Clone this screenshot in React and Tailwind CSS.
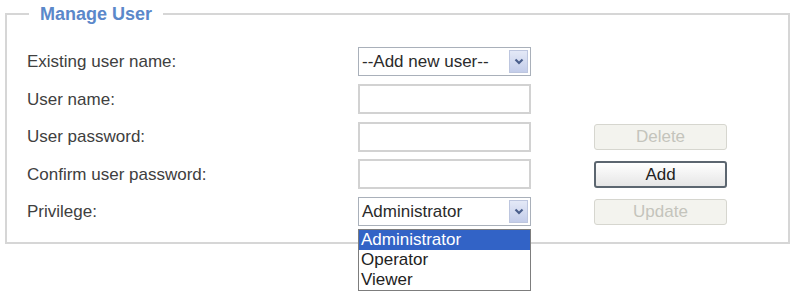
import { useState } from "react";

const FONT = { fontFamily: '"Liberation Sans", Arial, sans-serif' };

function SelectBox({ value }) {
  return (
    <div className="relative flex h-[29px] w-[173px] items-center border border-[#a9b0ba] bg-white pl-[3px] text-[17px] text-[#2b2b2b]">
      <span>{value}</span>
      <span className="absolute right-[2px] top-[2px] bottom-[2px] flex w-[19px] items-center justify-center border border-[#bdc6df] bg-gradient-to-b from-[#e4e9f7] to-[#c3cdea]">
        <svg width="10" height="7" viewBox="0 0 10 7">
          <path d="M1.5 1.5 L5 5 L8.5 1.5" fill="none" stroke="#4a5f8c" strokeWidth="2.2" />
        </svg>
      </span>
    </div>
  );
}

function TextBox() {
  return <div className="h-[30px] w-[173px] border-2 border-[#d2d2d2] bg-white" />;
}

function Btn({ children, disabled }) {
  return disabled ? (
    <div className="flex h-[26px] w-[133px] items-center justify-center rounded-[3px] border border-[#d6d6cf] bg-[#f3f3ee] text-[17px] text-[#c4c4bc]">
      {children}
    </div>
  ) : (
    <div className="flex h-[27px] w-[133px] items-center justify-center rounded-[3px] border-2 border-[#5c6670] bg-gradient-to-b from-white to-[#e6e6e6] text-[17px] text-[#222]">
      {children}
    </div>
  );
}

export default function App() {
  const [open] = useState(true);
  const rows = [
    { label: "Existing user name:", field: <SelectBox value="--Add new user--" /> },
    { label: "User name:", field: <TextBox /> },
    { label: "User password:", field: <TextBox />, btn: <Btn disabled>Delete</Btn> },
    { label: "Confirm user password:", field: <TextBox />, btn: <Btn>Add</Btn> },
    { label: "Privilege:", field: <SelectBox value="Administrator" />, btn: <Btn disabled>Update</Btn>, menu: true },
  ];

  return (
    <div className="h-[296px] w-[793px] bg-white pt-[4px]" style={FONT}>
      <fieldset className="ml-[5px] w-[785px] border-2 border-[#d6d6d6] pb-[11px] pl-[20px]">
        <legend className="ml-[2px] px-[11px] text-[18px] font-bold leading-[20px] text-[#5b88ca]">
          Manage User
        </legend>
        <div className="mt-[19px] flex flex-col">
          {rows.map((r) => (
            <div key={r.label} className="flex h-[37.5px] items-center">
              <div className="w-[331px] text-[17px] text-[#404040]">{r.label}</div>
              <div className="relative w-[173px]">
                {r.field}
                {r.menu && open && (
                  <div className="absolute left-0 top-[32px] z-10 w-[173px] border border-[#7d7d7d] bg-white text-[17px] leading-[20px] text-[#222]">
                    <div className="bg-[#3263c6] pl-[2px] text-white">Administrator</div>
                    <div className="pl-[2px]">Operator</div>
                    <div className="pl-[2px]">Viewer</div>
                  </div>
                )}
              </div>
              <div className="ml-[63px]">{r.btn}</div>
            </div>
          ))}
        </div>
      </fieldset>
    </div>
  );
}
